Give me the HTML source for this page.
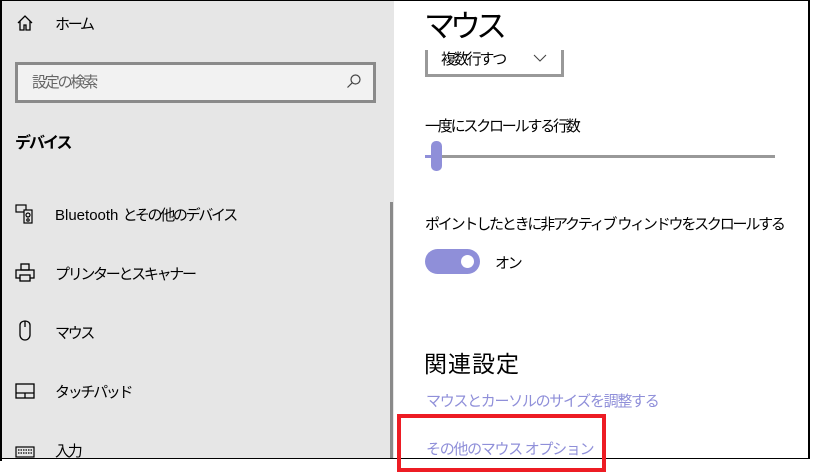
<!DOCTYPE html><html><head><meta charset="utf-8"><style>
body{margin:0;width:816px;height:461px;overflow:hidden;background:#fff;font-family:"Liberation Sans","Noto Sans CJK JP",sans-serif;position:relative;color:#000}
.a{position:absolute;white-space:nowrap}
#side{position:absolute;left:2px;top:0;width:392px;height:459px;background:#e6e6e6}
.nav{font-size:15px;letter-spacing:-2.3px}
.t{font-size:15px;letter-spacing:-2.2px}
.l{letter-spacing:0}
</style></head><body>
<div id="side"></div>
<div class="a" style="left:0;top:0;width:2px;height:461px;background:#000"></div>
<div class="a" style="left:0;top:0;width:810px;height:1px;background:#000"></div>
<div class="a" style="left:808px;top:0;width:2px;height:459px;background:#000"></div>
<div class="a" style="left:0;top:458px;width:810px;height:1px;background:#000"></div>
<div class="a" style="left:390px;top:202px;width:3px;height:256px;background:#8a8a8a"></div>
<svg class="a" style="left:16px;top:14px" width="18" height="18" viewBox="0 0 18 18" fill="none" stroke="#000" stroke-width="1.3"><path d="M2 9L9 2l7 7M4 7v9h4v-5h2v5h4V7"/></svg>
<div class="a nav" style="left:55px;top:13px">ホーム</div>
<div class="a" style="left:15px;top:62px;width:355px;height:35px;border:3px solid #8a8a8a;background:#f2f2f2"></div>
<div class="a t" style="left:32px;top:71px;color:#666">設定の検索</div>
<svg class="a" style="left:346px;top:73px" width="16" height="16" viewBox="0 0 16 16" fill="none" stroke="#444" stroke-width="1.2"><circle cx="9.5" cy="6.5" r="4.5"/><path d="M6.3 9.7L1.5 14.5"/></svg>
<div class="a" style="left:15px;top:129px;font-size:16px;font-weight:bold;letter-spacing:-2px">デバイス</div>
<svg class="a" style="left:15px;top:204px" width="20" height="20" viewBox="0 0 20 20" fill="none" stroke="#000" stroke-width="1.2"><rect x="1" y="1" width="10" height="7"/><rect x="9" y="6" width="8" height="13" fill="#e6e6e6"/><circle cx="13" cy="11" r="2"/><circle cx="13" cy="16" r="1.2"/></svg>
<div class="a nav" style="left:55px;top:204px"><span class="l">Bluetooth </span>とその他のデバイス</div>
<svg class="a" style="left:15px;top:263px" width="20" height="20" viewBox="0 0 20 20" fill="none" stroke="#000" stroke-width="1.3"><rect x="6" y="1" width="8" height="6"/><rect x="1" y="7" width="18" height="8"/><rect x="5" y="12" width="10" height="6" fill="#e6e6e6"/></svg>
<div class="a nav" style="left:55px;top:263px">プリンターとスキャナー</div>
<svg class="a" style="left:17px;top:320px" width="16" height="22" viewBox="0 0 16 22" fill="none" stroke="#000" stroke-width="1.3"><path d="M3 5a5 4 0 0 1 10 0v10a5 5 0 0 1-10 0zM8 1v6"/></svg>
<div class="a nav" style="left:55px;top:322px">マウス</div>
<svg class="a" style="left:15px;top:383px" width="20" height="16" viewBox="0 0 20 16" fill="none" stroke="#000" stroke-width="1.3"><rect x="1" y="1" width="18" height="14"/><path d="M1 10h18M10 10v5"/></svg>
<div class="a nav" style="left:55px;top:381px">タッチパッド</div>
<svg class="a" style="left:15px;top:446px" width="20" height="12" viewBox="0 0 20 12" fill="none" stroke="#000" stroke-width="1.2"><rect x="1" y="1" width="18" height="10"/><path d="M3 4h14M3 7h14" stroke-dasharray="1.5 1"/></svg>
<div class="a nav" style="left:55px;top:440px">入力</div>

<div class="a" style="left:424px;top:1px;font-size:31px;letter-spacing:-5px">マウス</div>
<div class="a" style="left:425px;top:50px;width:133px;height:24px;border:3px solid #999;border-top:none"></div>
<div class="a t" style="left:441px;top:48px">複数行すつ</div>
<svg class="a" style="left:533px;top:53px" width="14" height="10" viewBox="0 0 14 10" fill="none" stroke="#444" stroke-width="1.1"><path d="M1 2l6 6 6-6"/></svg>
<div class="a t" style="left:425px;top:115px">一度にスクロールする行数</div>
<div class="a" style="left:425px;top:155px;width:350px;height:3px;background:#999"></div>
<div class="a" style="left:425px;top:155px;width:10px;height:3px;background:#8f8fd9"></div>
<div class="a" style="left:431px;top:141px;width:11px;height:30px;border-radius:5px;background:#8f8fd9"></div>
<div class="a t" style="left:425px;top:213px">ポイントしたときに非アクティブ ウィンドウをスクロールする</div>
<div class="a" style="left:425px;top:249px;width:55px;height:25px;border-radius:13px;background:#8f8fd9"></div>
<div class="a" style="left:461px;top:255px;width:13px;height:13px;border-radius:50%;background:#fff"></div>
<div class="a t" style="left:495px;top:252px">オン</div>
<div class="a" style="left:424px;top:345px;font-size:23px;letter-spacing:1px">関連設定</div>
<div class="a t" style="left:426px;top:390px;color:#8f8fd9;letter-spacing:-1.3px">マウスとカーソルのサイズを調整する</div>
<div class="a t" style="left:426px;top:438px;color:#8f8fd9;letter-spacing:-1.3px">その他のマウス オプション</div>
<div class="a" style="left:397px;top:414px;width:201px;height:50px;border:4px solid #ed1c24"></div>
</body></html>
